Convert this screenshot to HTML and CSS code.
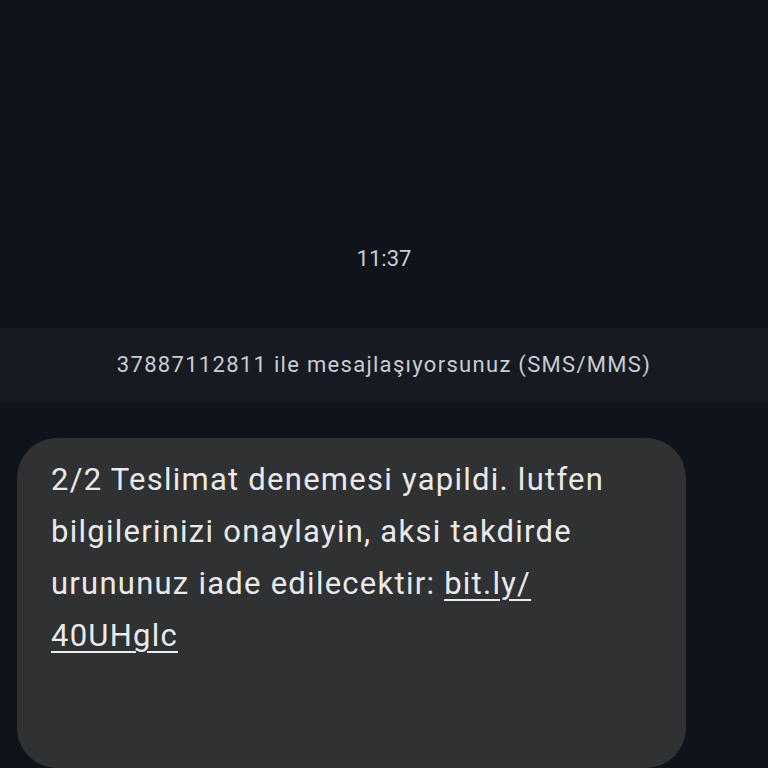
FILE: index.html
```html
<!DOCTYPE html>
<html>
<head>
<meta charset="utf-8">
<link rel="stylesheet" href="styles.css">
</head>
<body>
<div class="screen">
  <div class="time">11:37</div>
  <div class="banner">37887112811 ile mesajlaşıyorsunuz (SMS/MMS)</div>
  <div class="bubble">
    <p class="msg">2/2 Teslimat denemesi yapildi. lutfen bilgilerinizi onaylayin, aksi takdirde urununuz iade edilecektir: <span class="link">bit.ly/</span><br><span class="link">40UHglc</span></p>
  </div>
</div>
</body>
</html>
```
FILE: styles.css
```css
html, body {
  margin: 0;
  padding: 0;
  background: #0f131a;
  overflow: hidden;
}
.screen {
  width: 768px;
  height: 768px;
  display: flex;
  flex-direction: column;
  font-family: Roboto, "Noto Sans", sans-serif;
}
.time {
  margin-top: 245px;
  height: 28px;
  line-height: 28px;
  text-align: center;
  color: #c9ccd1;
  font-size: 22px;
}
.banner {
  margin-top: 55px;
  height: 74px;
  line-height: 74px;
  background: #171a21;
  color: #c9ccd1;
  font-size: 22px;
  letter-spacing: 1.3px;
  text-align: center;
}
.bubble {
  margin: 36px 0 0 17px;
  width: 669px;
  height: 400px;
  background: #303133;
  border-radius: 40px;
  padding: 16px 30px 0 34px;
  box-sizing: border-box;
}
.msg {
  margin: 0;
  color: #e9eaec;
  font-size: 31px;
  letter-spacing: 1.25px;
  line-height: 52px;
}
.link {
  text-decoration: underline;
  text-underline-offset: 5px;
  text-decoration-thickness: 2px;
}
```
